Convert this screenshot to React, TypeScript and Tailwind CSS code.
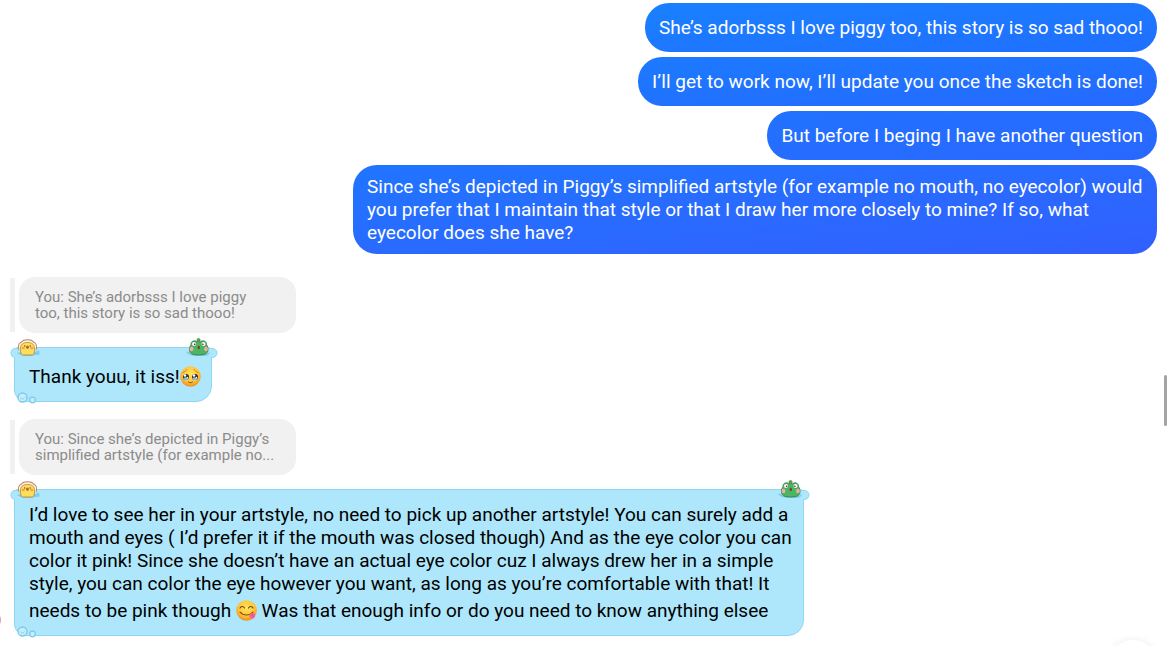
import type { ReactNode } from "react";

const emojiClass = "mt-[5px] mb-[5px] inline-block h-[21px] w-[21px] align-[-9px]";

const PleadingEmoji = () => (
  <svg viewBox="0 0 42 42" className={emojiClass} role="img" aria-label="pleading face">
    <defs>
      <radialGradient id="pleadFace" cx="50%" cy="38%" r="62%">
        <stop offset="0" stopColor="#ffe45c" />
        <stop offset="0.6" stopColor="#ffc83a" />
        <stop offset="1" stopColor="#f08c1c" />
      </radialGradient>
    </defs>
    <circle cx="21" cy="21" r="20.5" fill="url(#pleadFace)" />
    <path d="M6 13c3-1 6-3 8-6M36 13c-3-1-6-3-8-6" stroke="#b87420" strokeWidth="1.6" fill="none" strokeLinecap="round" />
    <circle cx="12" cy="22" r="6" fill="#3b2416" />
    <circle cx="30" cy="22" r="6" fill="#3b2416" />
    <path d="M6.500 24c2 6 9 6 11 0-3-2-8-2-11 0ZM24.500 24c2 6 9 6 11 0-3-2-8-2-11 0Z" fill="#7fc0ee" />
    <circle cx="10" cy="19" r="2.600" fill="#fff" />
    <circle cx="28" cy="19" r="2.600" fill="#fff" />
    <circle cx="15" cy="23" r="1.300" fill="#fff" />
    <circle cx="33" cy="23" r="1.300" fill="#fff" />
    <path d="M17 32c2 2 6 2 8 0" stroke="#7a3f12" strokeWidth="2" fill="none" strokeLinecap="round" />
  </svg>
);

const YumEmoji = () => (
  <svg viewBox="0 0 42 42" className={emojiClass} role="img" aria-label="face savoring food">
    <defs>
      <radialGradient id="yumFace" cx="50%" cy="38%" r="62%">
        <stop offset="0" stopColor="#ffe45c" />
        <stop offset="0.6" stopColor="#ffc83a" />
        <stop offset="1" stopColor="#f08c1c" />
      </radialGradient>
    </defs>
    <circle cx="21" cy="21" r="20.5" fill="url(#yumFace)" />
    <path d="M8 16c2-4 7-4 9 0M25 16c2-4 7-4 9 0" stroke="#6b3a12" strokeWidth="2.2" fill="none" strokeLinecap="round" />
    <path d="M8 24c6 8 20 8 26 0" stroke="#8a4a14" strokeWidth="2.4" fill="none" strokeLinecap="round" />
    <path d="M27 29c3-3 8-4 10-2 3 3 1 9-3 10-5 1-8-4-7-8Z" fill="#f5609a" />
    <path d="M31 30c2 0 3 1 4 3" stroke="#d93a78" strokeWidth="1.200" fill="none" />
  </svg>
);

const DuckCorner = () => (
  <svg viewBox="0 0 34 24" className="absolute -top-[11px] -left-[5px] h-6 w-[34px]" aria-hidden="true">
    <path d="M9 11.500H5.500a4.500 4.500 0 0 0-1 8.900V21H12v-9Z" fill="#aee7fb" />
    <path d="M9 11.500H5.500a4.500 4.500 0 0 0-1 8.900" fill="none" stroke="#8fd6f0" />
    <path d="M7 16c3-1 5 0 10 0s8 0 10-2c3-1 3 2 2 4-4-1-5 1-11 1s-8-1-11-3Z" fill="#7ccdf0" />
    <path d="M9 13c-1.500-4 0-7 2.500-8 2-3 10-3 12 0 2.500 1 4 4 2.500 8" fill="#fff4e2" stroke="#b98460" strokeWidth="1.100" />
    <path d="M10.500 12.500c-.5-5 2.500-7 7-7s7.500 2 7 7c0 3-.5 5-2 5.500h-10c-1.500-.5-2-2.500-2-5.500Z" fill="#fbdf58" stroke="#b58436" strokeWidth=".8" />
    <ellipse cx="13.200" cy="11" rx="1.600" ry="1.200" fill="#f3a052" />
    <ellipse cx="21.800" cy="11" rx="1.600" ry="1.200" fill="#f3a052" />
    <circle cx="14.800" cy="9" r=".7" fill="#6a4420" />
    <circle cx="20.200" cy="9" r=".7" fill="#6a4420" />
    <ellipse cx="17.500" cy="10.200" rx="1.400" ry="1.600" fill="#b5622c" />
  </svg>
);

const FrogCorner = () => (
  <svg viewBox="0 0 34 24" className="absolute -top-[11px] -right-[7px] h-6 w-[34px]" aria-hidden="true">
    <path d="M24 11.500h4.500a4.500 4.500 0 0 1 0 9H26V21h-4Z" fill="#aee7fb" />
    <path d="M25 11.500h3.500a4.500 4.500 0 0 1 0 9H27" fill="none" stroke="#8fd6f0" />
    <path d="M2 15c3-1 4 2 6 2h13c2 0 3-1 5-2-1 4-4 4-9 4-7 0-12 0-15-4Z" fill="#7ccdf0" />
    <path d="M5.500 12.500c0-2 .5-3.500 1.500-5-.5-3 3.500-5 5.800-2.700 1.200-.4 2.600-.4 3.700 0 2.500-2.300 6.500-.3 6 2.700 1 1.500 1.500 3 1.500 5 0 3.500-2 5.500-9.300 5.500s-9.200-2-9.200-5.500Z" fill="#4cb562" stroke="#2f7a42" strokeWidth=".8" />
    <path d="M13.500 4.800c-1-1.500-.5-3.300 1-3.300s2 1.600 1.200 3.300" fill="#6fa04a" stroke="#2f7a42" strokeWidth=".7" />
    <circle cx="10" cy="7" r="2.300" fill="#fff" stroke="#2f7a42" strokeWidth=".4" />
    <circle cx="19.500" cy="7" r="2.300" fill="#fff" stroke="#2f7a42" strokeWidth=".4" />
    <circle cx="10.600" cy="7.300" r=".8" fill="#222" />
    <circle cx="18.900" cy="7.300" r=".8" fill="#222" />
    <ellipse cx="7.500" cy="12" rx="1.900" ry="2.200" fill="#f6aaa4" />
    <ellipse cx="22" cy="12" rx="1.900" ry="2.200" fill="#f6aaa4" />
    <ellipse cx="14.800" cy="10.500" rx="1.200" ry="1.800" fill="#7c4030" />
  </svg>
);

const FoamCorner = () => (
  <svg viewBox="0 0 22 12" className="absolute -bottom-[3px] left-[2px] h-3 w-[22px]" aria-hidden="true">
    <circle cx="5.500" cy="5.500" r="4.500" fill="#c4eefc" stroke="#7cc9e8" strokeWidth="1.300" />
    <path d="M3.500 5.500c0 2 3.500 2 4 0" fill="none" stroke="#7cc9e8" strokeWidth=".8" />
    <circle cx="15.500" cy="8" r="2.800" fill="#c4eefc" stroke="#7cc9e8" strokeWidth="1.200" />
  </svg>
);

const Sent = ({ color, children }: { color: string; children: ReactNode }) => (
  <p className={`max-w-[804px] rounded-[24px] px-[14px] text-white ${color}`}>{children}</p>
);

const Quote = ({ children }: { children: ReactNode }) => (
  <div className="flex gap-1">
    <div className="my-px w-[5px] bg-[#f1f1f1]" />
    <blockquote className="w-[277px] rounded-2xl bg-[#f1f1f1] px-4 py-3 text-[15px] leading-4 text-[#8b8b8b]">
      {children}
    </blockquote>
  </div>
);

const Received = ({ children }: { children: ReactNode }) => (
  <div className="relative ml-1 w-fit max-w-[790px] rounded-t-sm rounded-br-[16px] rounded-bl-[12px] border border-[#8fd6f0] bg-[#aee7fb] pt-[13px] pr-[10px] pb-[9px] pl-[14px] text-black">
    <DuckCorner />
    <FrogCorner />
    <FoamCorner />
    <p>{children}</p>
  </div>
);

export default function App() {
  return (
    <main className="relative h-screen overflow-hidden bg-white font-['Roboto',sans-serif] text-[19px] leading-[23px]">
      <section className="flex flex-col items-end gap-[5px] pt-[3px] pr-[13px] pl-4">
        <Sent color="py-[13px] bg-linear-to-br from-[#1a80ff] to-[#206fff]">
          She’s adorbsss I love piggy too, this story is so sad thooo!
        </Sent>
        <Sent color="py-[13px] bg-linear-to-br from-[#1c7aff] to-[#2569ff]">
          I’ll get to work now, I’ll update you once the sketch is done!
        </Sent>
        <Sent color="py-[13px] bg-linear-to-br from-[#2272ff] to-[#2967ff]">
          But before I beging I have another question
        </Sent>
        <Sent color="py-[10px] bg-linear-to-br from-[#1f75ff] to-[#315fff]">
          Since she’s depicted in Piggy’s simplified artstyle (for example no mouth, no eyecolor) would
          you prefer that I maintain that style or that I draw her more closely to mine? If so, what
          eyecolor does she have?
        </Sent>
      </section>

      <section className="flex flex-col gap-[17px] pt-[23px] pl-[10px]">
        <div className="flex flex-col gap-[14px]">
          <Quote>
            You: She’s adorbsss I love piggy
            <br />
            too, this story is so sad thooo!
          </Quote>
          <Received>
            Thank youu, it iss!
            <PleadingEmoji />
          </Received>
        </div>
        <div className="flex flex-col gap-[14px]">
          <Quote>
            You: Since she’s depicted in Piggy’s
            <br />
            simplified artstyle (for example no...
          </Quote>
          <Received>
            I’d love to see her in your artstyle, no need to pick up another artstyle! You can surely add a mouth and
            eyes ( I’d prefer it if the mouth was closed though) And as the eye color you can color it pink! Since she
            doesn’t have an actual eye color cuz I always drew her in a simple style, you can color the eye however you
            want, as long as you’re comfortable with that! It needs to be pink though <YumEmoji /> Was that enough info
            or do you need to know anything elsee
          </Received>
        </div>
      </section>

      <div className="absolute top-[375px] right-[3px] h-[51px] w-[3px] rounded-full bg-[#a3a3a3]" />
      <div className="absolute bottom-[18px] -left-[15px] h-4 w-4 rounded-full bg-[#d9a0ae]" />
      <button
        aria-label="Scroll to bottom"
        className="absolute -bottom-[42px] right-[13px] h-12 w-12 rounded-full bg-white shadow-[0_0_8px_rgba(0,0,0,0.08)]"
      />
    </main>
  );
}
